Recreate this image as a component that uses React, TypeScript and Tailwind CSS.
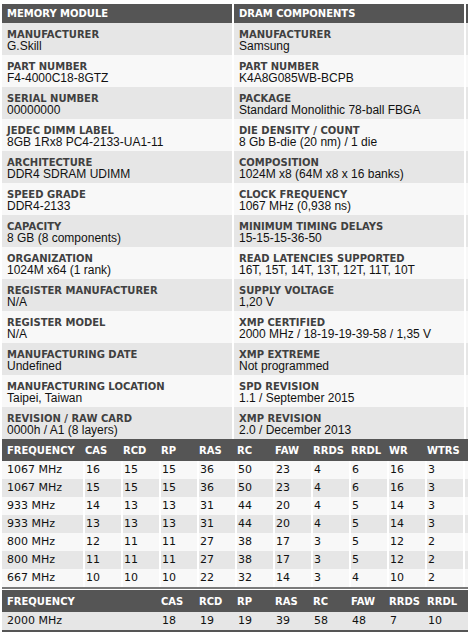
const MODULE = [
  ['MANUFACTURER', 'G.Skill'],
  ['PART NUMBER', 'F4-4000C18-8GTZ'],
  ['SERIAL NUMBER', '00000000'],
  ['JEDEC DIMM LABEL', '8GB 1Rx8 PC4-2133-UA1-11'],
  ['ARCHITECTURE', 'DDR4 SDRAM UDIMM'],
  ['SPEED GRADE', 'DDR4-2133'],
  ['CAPACITY', '8 GB (8 components)'],
  ['ORGANIZATION', '1024M x64 (1 rank)'],
  ['REGISTER MANUFACTURER', 'N/A'],
  ['REGISTER MODEL', 'N/A'],
  ['MANUFACTURING DATE', 'Undefined'],
  ['MANUFACTURING LOCATION', 'Taipei, Taiwan'],
  ['REVISION / RAW CARD', '0000h / A1 (8 layers)'],
];

const DRAM = [
  ['MANUFACTURER', 'Samsung'],
  ['PART NUMBER', 'K4A8G085WB-BCPB'],
  ['PACKAGE', 'Standard Monolithic 78-ball FBGA'],
  ['DIE DENSITY / COUNT', '8 Gb B-die (20 nm) / 1 die'],
  ['COMPOSITION', '1024M x8 (64M x8 x 16 banks)'],
  ['CLOCK FREQUENCY', '1067 MHz (0,938 ns)'],
  ['MINIMUM TIMING DELAYS', '15-15-15-36-50'],
  ['READ LATENCIES SUPPORTED', '16T, 15T, 14T, 13T, 12T, 11T, 10T'],
  ['SUPPLY VOLTAGE', '1,20 V'],
  ['XMP CERTIFIED', '2000 MHz / 18-19-19-39-58 / 1,35 V'],
  ['XMP EXTREME', 'Not programmed'],
  ['SPD REVISION', '1.1 / September 2015'],
  ['XMP REVISION', '2.0 / December 2013'],
];

const JEDEC_HEAD = ['FREQUENCY', 'CAS', 'RCD', 'RP', 'RAS', 'RC', 'FAW', 'RRDS', 'RRDL', 'WR', 'WTRS'];
const JEDEC = [
  ['1067 MHz', '16', '15', '15', '36', '50', '23', '4', '6', '16', '3'],
  ['1067 MHz', '15', '15', '15', '36', '50', '23', '4', '6', '16', '3'],
  ['933 MHz', '14', '13', '13', '31', '44', '20', '4', '5', '14', '3'],
  ['933 MHz', '13', '13', '13', '31', '44', '20', '4', '5', '14', '3'],
  ['800 MHz', '12', '11', '11', '27', '38', '17', '3', '5', '12', '2'],
  ['800 MHz', '11', '11', '11', '27', '38', '17', '3', '5', '12', '2'],
  ['667 MHz', '10', '10', '10', '22', '32', '14', '3', '4', '10', '2'],
];

const XMP_HEAD = ['CAS', 'RCD', 'RP', 'RAS', 'RC', 'FAW', 'RRDS', 'RRDL'];
const XMP = ['18', '19', '19', '39', '58', '48', '7', '10'];

const grid = 'grid grid-cols-[81px_repeat(10,36px)_1fr] gap-x-[2px]';

function InfoCell({ label, value, bg }: { label: string; value: string; bg: string }) {
  return (
    <div className={`h-[32px] w-[230px] shrink-0 pl-[5px] pt-[6px] ${bg}`}>
      <div className="font-['DejaVu_Sans',sans-serif] text-[10px] font-bold leading-[11px] text-[#404040] whitespace-nowrap">
        {label}
      </div>
      <div className="font-['Liberation_Sans',Arial,sans-serif] text-[12px] leading-[13px] text-[#111] whitespace-nowrap">
        {value}
      </div>
    </div>
  );
}

export default function App() {
  return (
    <div className="w-[468px] h-[635px] overflow-hidden bg-white pt-[4px] pl-[2px]">
      {/* module / dram section */}
      <div className="flex gap-[2px] h-[19px] items-stretch">
        {['MEMORY MODULE', 'DRAM COMPONENTS', ''].map((h, i) => (
          <div
            key={i}
            className="w-[230px] shrink-0 bg-[#555555] pl-[5px] flex items-center font-['DejaVu_Sans',sans-serif] text-[10px] font-bold text-white"
          >
            {h}
          </div>
        ))}
      </div>
      {MODULE.map((m, i) => {
        const bg = i % 2 === 0 ? 'bg-[#e6e6e6]' : 'bg-[#f8f8f8]';
        return (
          <div key={i} className="flex gap-[2px]">
            <InfoCell label={m[0]} value={m[1]} bg={bg} />
            <InfoCell label={DRAM[i][0]} value={DRAM[i][1]} bg={bg} />
            <div className={`h-[32px] w-[230px] shrink-0 ${bg}`} />
          </div>
        );
      })}

      {/* jedec timings */}
      <div className="border-b-2 border-[#7a7a7a] font-['DejaVu_Sans',sans-serif]">
        <div className={`${grid} h-[22px] items-center bg-[#555555] text-[10px] font-bold text-white`}>
          {JEDEC_HEAD.map((h, i) => (
            <div key={h} className={i === 0 ? 'pl-[5px]' : ''}>
              {h}
            </div>
          ))}
          <div />
        </div>
        {JEDEC.map((r, i) => (
          <div key={i} className={`${grid} h-[18px] text-[11px] leading-[18px] text-[#111]`}>
            {r.map((v, j) => (
              <div key={j} className={`${i % 2 === 0 ? 'bg-[#f8f8f8]' : 'bg-[#e6e6e6]'} ${j === 0 ? 'pl-[5px]' : 'pl-[1px]'}`}>
                {v}
              </div>
            ))}
            <div className={i % 2 === 0 ? 'bg-[#f8f8f8]' : 'bg-[#e6e6e6]'} />
          </div>
        ))}
      </div>

      {/* xmp timings */}
      <div className="mt-[1px] border-b-2 border-[#555555] font-['DejaVu_Sans',sans-serif]">
        <div className={`${grid} h-[22px] items-center bg-[#555555] text-[10px] font-bold text-white`}>
          <div className="col-span-3 pl-[5px]">FREQUENCY</div>
          {XMP_HEAD.map((h) => (
            <div key={h}>{h}</div>
          ))}
        </div>
        <div className={`${grid} h-[18px] bg-[#e6e6e6] text-[11px] leading-[18px] text-[#111]`}>
          <div className="col-span-3 pl-[5px]">2000 MHz</div>
          {XMP.map((v, j) => (
            <div key={j} className="pl-[1px]">
              {v}
            </div>
          ))}
        </div>
      </div>
    </div>
  );
}
